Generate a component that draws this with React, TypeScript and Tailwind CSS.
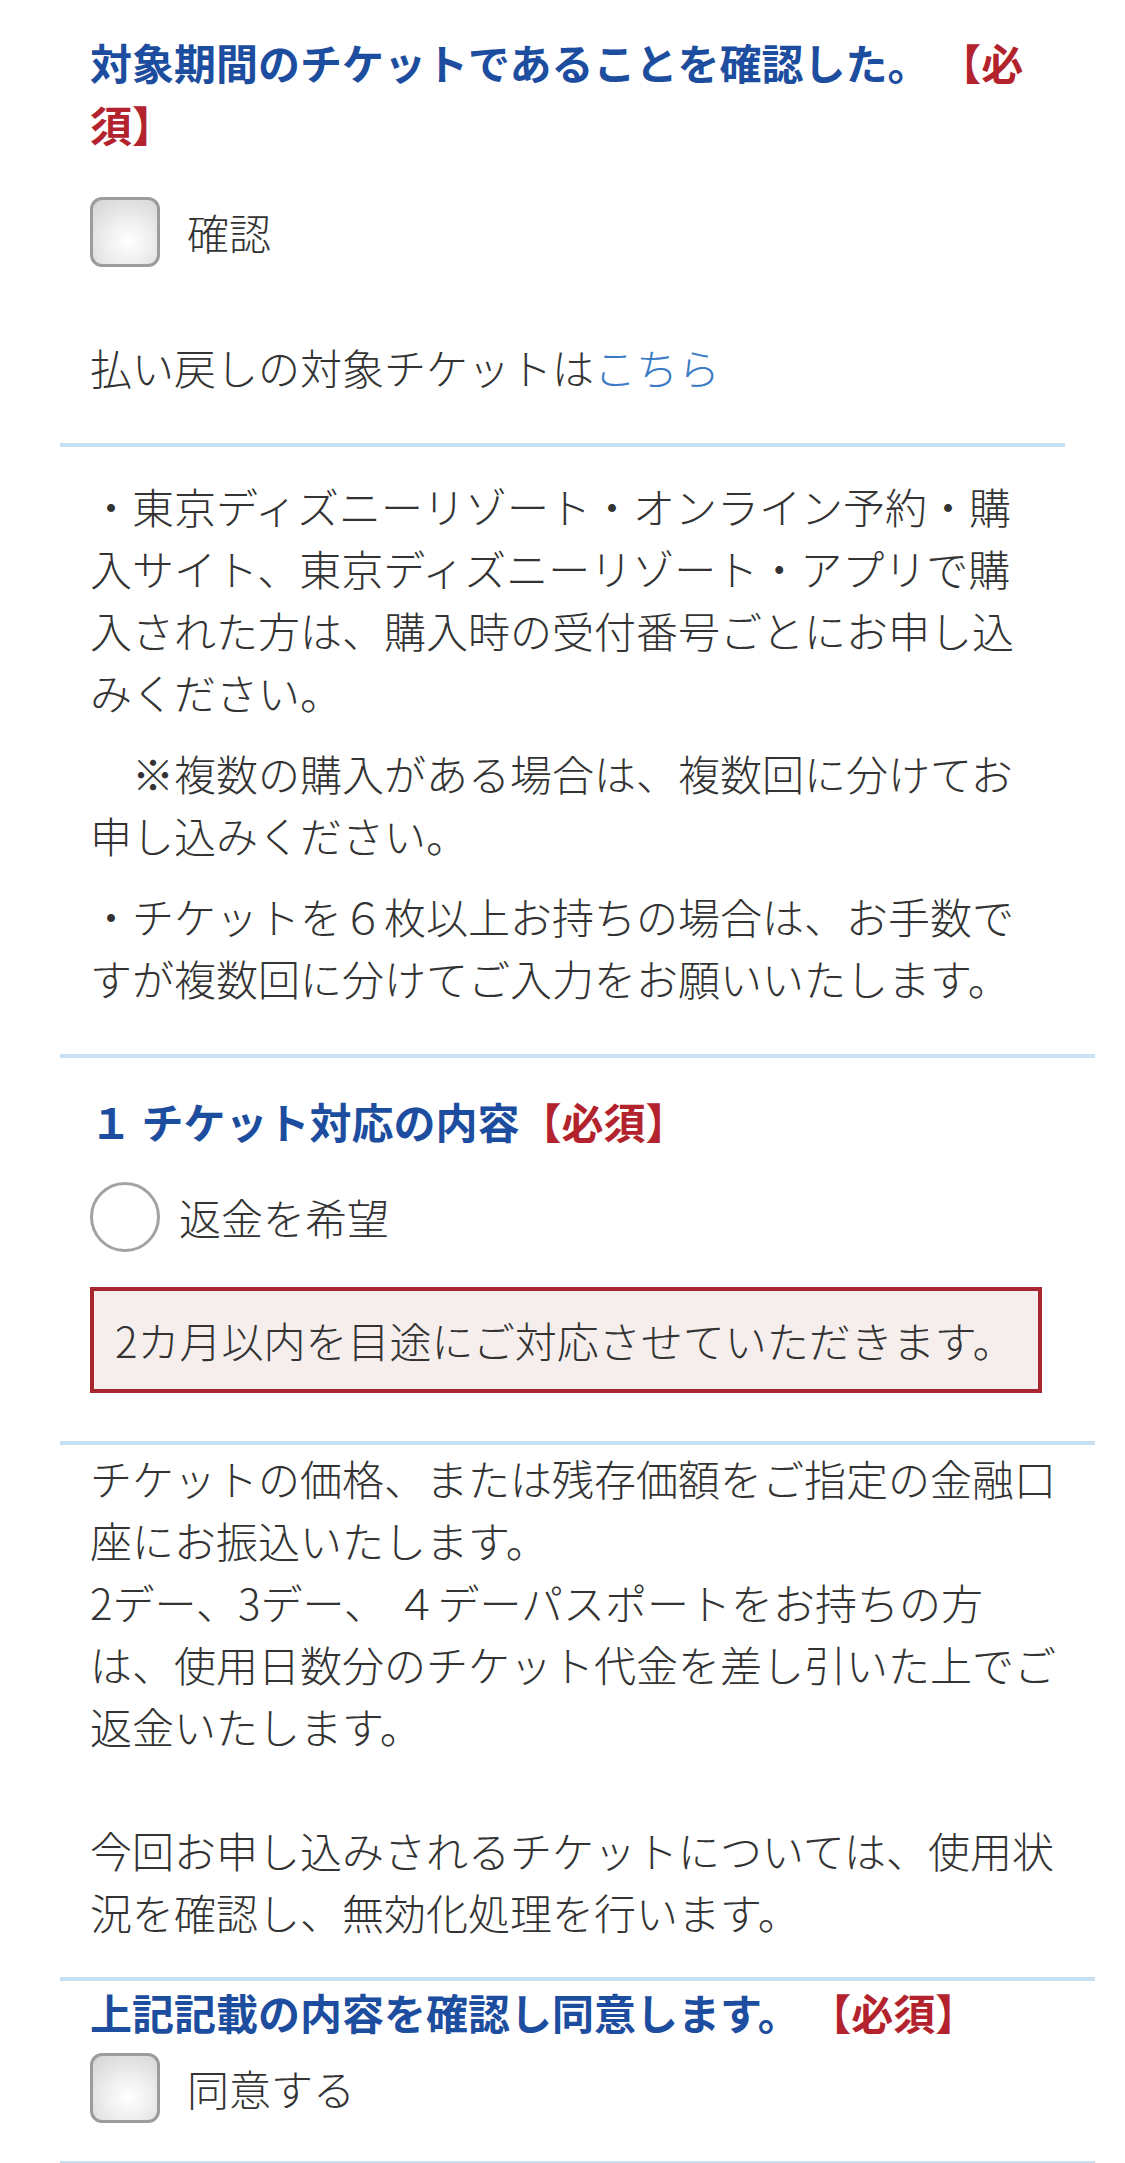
import React from 'react';

const Checkbox: React.FC = () => (
  <span className="block h-[70px] w-[70px] shrink-0 rounded-[12px] border-[3px] border-[#9c9c9c] bg-[radial-gradient(circle_at_55%_65%,#ffffff_0%,#f1f1f1_35%,#d3d3d3_100%)]" />
);

const Radio: React.FC = () => (
  <span className="block h-[70px] w-[70px] shrink-0 rounded-full border-[3px] border-[#a2a2a2] bg-white" />
);

const Required: React.FC = () => <span className="text-[#b3232d]">【必須】</span>;

export default function App() {
  return (
    <div className="min-h-screen bg-white font-['Noto_Sans_CJK_JP',sans-serif] text-[42px] font-light leading-[62px] text-[#333333]">
      <div className="pl-[60px]">
        {/* 対象期間の確認 */}
        <section className="w-[1005px] border-b-4 border-[#c7e0f2] pl-[30px] pr-[20px] pt-[31px] pb-[45px]">
          <h2 className="font-bold text-[#1d4d9e]">
            対象期間のチケットであることを確認した。 <Required />
          </h2>
          <label className="mt-[42px] flex items-center gap-[27px]">
            <Checkbox />
            <span>確認</span>
          </label>
          <p className="mt-[69px]">
            払い戻しの対象チケットは<a className="text-[#3b7bc6]">こちら</a>
          </p>
        </section>

        {/* 注意事項 */}
        <section className="w-[1035px] border-b-4 border-[#c7e0f2] pl-[30px] pr-[53px] pt-[28px] pb-[45px]">
          <p>・東京ディズニーリゾート・オンライン予約・購入サイト、東京ディズニーリゾート・アプリで購入された方は、購入時の受付番号ごとにお申し込みください。</p>
          <p className="mt-[19px]">　※複数の購入がある場合は、複数回に分けてお申し込みください。</p>
          <p className="mt-[19px]">・チケットを６枚以上お持ちの場合は、お手数ですが複数回に分けてご入力をお願いいたします。</p>
        </section>

        {/* 1 チケット対応の内容 */}
        <section className="w-[1035px] border-b-4 border-[#c7e0f2] pl-[30px] pr-[53px] pt-[32px] pb-[48px]">
          <h2 className="font-bold text-[#1d4d9e]">
            １ チケット対応の内容<Required />
          </h2>
          <label className="mt-[30px] flex items-center gap-[19px]">
            <Radio />
            <span>返金を希望</span>
          </label>
          <div className="mt-[35px] border-4 border-[#a8262e] bg-[#f6eeed] px-[21px] py-[18px]">
            2カ月以内を目途にご対応させていただきます。
          </div>
        </section>

        {/* 返金の説明 */}
        <section className="w-[1035px] border-b-4 border-[#c7e0f2] pl-[30px] pr-[33px] pt-[2px] pb-[34px]">
          <p>
            チケットの価格、または残存価額をご指定の金融口座にお振込いたします。
            <br />
            2デー、3デー、 ４デーパスポートをお持ちの方は、使用日数分のチケット代金を差し引いた上でご返金いたします。
            <br />
            <br />
            今回お申し込みされるチケットについては、使用状況を確認し、無効化処理を行います。
          </p>
        </section>

        {/* 同意 */}
        <section className="w-[1035px] border-b-4 border-[#c7e0f2] pl-[30px] pr-[53px] pb-[38px]">
          <h2 className="font-bold text-[#1d4d9e]">
            上記記載の内容を確認し同意します。 <Required />
          </h2>
          <label className="mt-[10px] flex items-center gap-[27px]">
            <Checkbox />
            <span>同意する</span>
          </label>
        </section>
      </div>
    </div>
  );
}
